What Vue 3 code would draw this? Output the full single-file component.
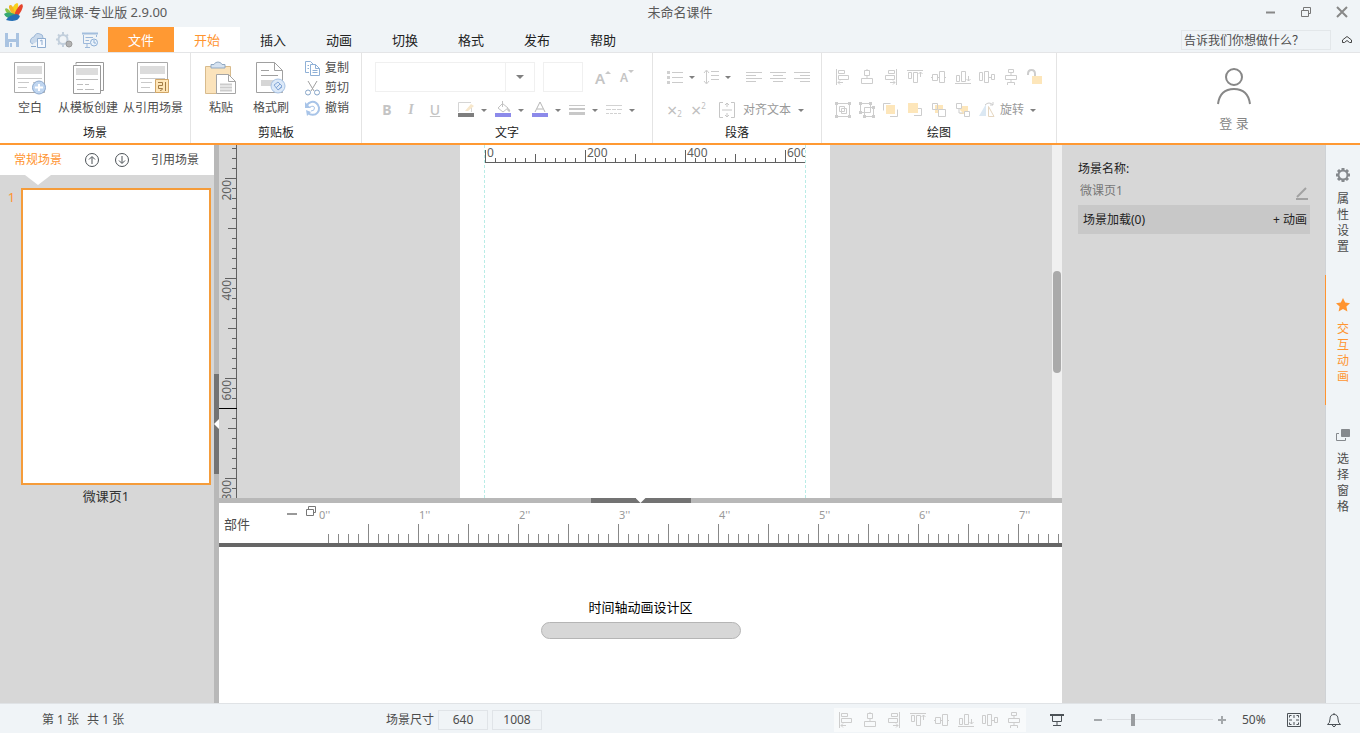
<script setup>
import { h, ref, computed, onMounted, onUnmounted } from 'vue'

const Glyph = (props) =>
  h(
    'svg',
    {
      width: props.w || 18,
      height: props.h || props.w || 18,
      viewBox: `0 0 ${props.w || 18} ${props.h || props.w || 18}`,
      fill: 'none',
      'aria-hidden': 'true',
    },
    props.layers.map(([d, stroke, fill, width]) =>
      h('path', {
        d,
        stroke: stroke || 'none',
        fill: fill || 'none',
        'stroke-width': width || 1,
      })
    )
  )
Glyph.props = ['layers', 'w', 'h']

const G = '#cdcdcd'
const B = '#8fb0d6'
const Y = '#fde6ba'

const alignIcons = [
  { name: '左对齐', layers: [['M2.5 1V17M4.5 2.5H10.5V5.5H4.5ZM4.5 7.5H14.5V11.5H4.5ZM4 14.5H9M6 12.5L4 14.5L6 16.5', G]] },
  { name: '水平居中', layers: [['M6.5 2.5H11.5V7.5H6.5ZM3.5 10.5H14.5V15.5H3.5ZM9 7.5V10.5M9 1V2.5', G]] },
  { name: '右对齐', layers: [['M14.5 1V17M6.5 2.5H12.5V5.5H6.5ZM3.5 7.5H12.5V11.5H3.5ZM8 14.5H13M11 12.5L13 14.5L11 16.5', G]] },
  { name: '顶端对齐', layers: [['M1 2.5H17M2.5 4.5H5.5V10.5H2.5ZM7.5 4.5H11.5V14.5H7.5ZM14.5 4V9M12.5 6L14.5 4L16.5 6', G]] },
  { name: '垂直居中', layers: [['M2.5 6.5H7.5V12.5H2.5ZM9.5 3.5H14.5V14.5H9.5ZM1 9.5H2.5M7.5 9.5H9.5M14.5 9.5H16', G]] },
  { name: '底端对齐', layers: [['M1 15.5H17M2.5 7.5H5.5V13.5H2.5ZM7.5 3.5H11.5V13.5H7.5ZM14.5 8V13M12.5 11L14.5 13L16.5 11', G]] },
  { name: '横向分布', layers: [['M1.5 4.5H4.5V12.5H1.5ZM6.5 3.5H10.5V14.5H6.5ZM13.5 6.5H16.5V11.5H13.5ZM11 9.5H13', G]] },
  { name: '纵向分布', layers: [['M6.5 1.5H11.5V4.5H6.5ZM3.5 7.5H14.5V11.5H3.5ZM5.5 14.5H12.5V17M5.5 17V14.5M9 4.5V7.5M9 11.5V14.5', G]] },
]
const lockIcon = { name: '锁定', layers: [['M2 7V6Q2 2 5.5 2Q9 2 9 6V9', G, 'none', 2], ['M6 8H16V16H6Z', '', Y]] }

const drawIcons = [
  { name: '组合', layers: [['M2.5 2.5H15.5V15.5H2.5ZM5.5 5.5H10.5V10.5H5.5ZM7.5 7.5H12.5V12.5H7.5Z', G], ['M1 1H4V4H1ZM14 1H17V4H14ZM1 14H4V17H1ZM14 14H17V17H14Z', '', G]] },
  { name: '取消组合', layers: [['M2.5 2.5H12.5V11.5H2.5ZM6.5 6.5H15.5V15.5H6.5Z', G], ['M1 1H4V4H1ZM11 1H14V4H11ZM1 10H4V13H1ZM14 5H17V8H14ZM5 14H8V17H5ZM14 14H17V17H14Z', '', G]] },
  { name: '置于顶层', layers: [['M4 4H13V13H4Z', '', Y], ['M8.5 2.5H1.500V9.5M8 15.500H15.500V8.5', G]] },
  { name: '上移一层', layers: [['M2 2H12V12H2Z', '', Y], ['M8 14.5H15.5V7.5H12', G]] },
  { name: '下移一层', layers: [['M5 4H13V12H5Z', '', Y], ['M2.5 2.5H7.5V8.5H2.5Z', G], ['M8.500 8.500H15.500V15.500H8.500Z', G, '#fff']] },
  { name: '置于底层', layers: [['M6 5H14V13H6Z', '', Y], ['M2.5 2.5H7.5V7.5H2.5ZM10.5 10.5H15.5V15.5H10.5ZM5 8V12H9', G, '#fff']] },
  { name: '镜像', layers: [['M8 3V15H1Z', '', '#dbe8f3'], ['M10.5 5.5L16 15.5H10.5Z', '#e5d6c0'], ['M7 4Q11 0 15 4M15 1V4H12', G]] },
]

const sheet = [
  ['M1.5 1.5H31.5V31.5H1.5Z', '#aaa', '#fff'],
  ['M4 5H29V13H4Z', '', '#dcdcdc'],
  ['M4 17.5H29M5 21.5H16M5 26.5H14M20 21.5H27', '#c9c9c9'],
]
const sceneButtons = [
  { label: '空白', layers: [...sheet, ['M26 20A6.500 6.500 0 1 1 26 33A6.500 6.500 0 1 1 26 20', '#8ca9cf', '#c0d6f0'], ['M26 23V30M22 26.500H30', '#fff', '', 2]] },
  { label: '从模板创建', layers: [['M5 3.5V1.5H32.5V29.5H30', '#999'], ['M2.5 4.5H29.5V32.5H2.5Z', '#999', '#fff'], ['M5 7H27V14H5Z', '', '#dcdcdc'], ['M5 18.5H27M6 23.5H12M14 23.5H18M6 28.500H12M14 28.500H23', '#bdbdbd']] },
  { label: '从引用场景', layers: [...sheet, ['M19.5 18.5H32.5V31.5H19.5Z', '#d1a667', '#ffe6b8'], ['M22 21.5H26.500V24.5H22.5V27.5H26.500Q26.500 29.500 24 29.500M29.500 21V30', '#a27c45']] },
]
const clipButtons = [
  {
    label: '粘贴',
    layers: [['M1.500 5.500H26.500V32.500H1.500Z', '#d8bb8c', '#fbe3bb'], ['M7 7V3.500H10Q11 1 14 1Q17 1 18 3.500H21V7Z', '#91a9c3', '#d5e2f0'], ['M12.500 13.500H24.500L31.500 20.500V32.500H12.500Z', '#a5a5a5', '#fff'], ['M24.500 13.500V20.500H31.500', '#a5a5a5'], ['M16 23.500H28M16 26.500H28M16 29.500H28', '#ccc', '', 2]],
  },
  {
    label: '格式刷',
    layers: [['M2.500 1.500H20.500L28.500 9.500V31.500H2.500Z', '#a0a0a0', '#fff'], ['M20.500 1.500V9.500H28.500M7 9.500H15M7 14.500H24', '#a0a0a0'], ['M7 19H23V25H7Z', '', '#d6d6d6'], ['M24 18A7 7 0 1 1 24 32A7 7 0 1 1 24 18', '#a7c2e4', '#dce9f8'], ['M20 24L24 21L28 25L24 29ZM22 27L26 23M24 29L28 26', '#85a8d8']],
  },
]
const clipActions = [
  { label: '复制', layers: [['M1.500 1.500H6.500L9.500 4.500M5 12.500H1.500V1.500M6.500 4.500H11.500L15.500 8.500V15.500H6.500ZM11.500 4.500V8.500H15.500M8.500 10.500H13.500M8.500 12.500H13.500M3.500 5.500H5M3.500 8.500H5', B]] },
  { label: '剪切', layers: [['M4 1L10 11M13 1L7 11', '#a0a0a0'], ['M4 10A2.500 2.500 0 1 1 4 15A2.500 2.500 0 1 1 4 10M13 10A2.500 2.500 0 1 1 13 15A2.500 2.500 0 1 1 13 10', '#87a5c8']] },
  { label: '撤销', layers: [['M3 5A6.500 6.500 0 1 1 4 13', '#a8c4e8', '', 2], ['M6 7Q10 5 10.500 8Q10.500 11 7 11', '#a8c4e8', '', 1], ['M1 2V8H7Z', '', '#a8c4e8'], ['M2 10L7 12L3 16Z', '', '#a8c4e8']] },
]

const quickIcons = [
  { name: '保存', layers: [['M2 2H16V16H2Z', '', '#a9c3e1'], ['M5 2H13V8H5ZM6 11H13V16H6Z', '', '#f0f5fa'], ['M8 12V16', '#a9c3e1', '', 2]] },
  { name: '发布', layers: [['M4 13Q0 12 2 8Q3 6 5 6Q7 1 11 3Q14 3 14 7', '#9db8d8', '#c9d9eb'], ['M8.500 7.500H16.500V16.500H8.500Z', '#8fadd0', '#f7faff'], ['M11 10L13 9V14M2 15.500H7', '#8fadd0']] },
  { name: '设置', layers: [['M8 4A4.500 4.500 0 1 1 8 13A4.500 4.500 0 1 1 8 4', '#c2cfdc', '', 2], ['M8 1V4M8 13V16M1 8.500H4M3 3.500L5 5.500M13 3.500L11 5.500M3 13.500L5 11.500', '#c2cfdc', '', 2], ['M14 10A3 3 0 1 1 14 16A3 3 0 1 1 14 10', '#999', '#b2b2b2']] },
  { name: '预览', layers: [['M1 2.500H17', '#a3bedd', '', 2], ['M2.500 4V12.500H9M4.500 6.500H12M4.500 9.500H8M4 16.500H9M6 13V16M15.500 4V6', '#9cb8da'], ['M13 8A3.500 3.500 0 1 1 13 15A3.500 3.500 0 1 1 13 8M13 9V12H15', '#8fb0d6', '#eaf3fc']] },
]

const tabs = ['开始', '插入', '动画', '切换', '格式', '发布', '帮助']

const textTools = [
  { name: '边框颜色', layers: [['M1.500 11V1.500H14M14.500 6V11', '#d5d5d5'], ['M8 10L14 3L17 5L11 10Z', '', '#f7e7cb'], ['M1 12H17V16H1Z', '', '#7e7e7e']] },
  { name: '填充颜色', layers: [['M8.500 2.500L14 7L9 11L4 7ZM8.500 0V6', '#c2c2c2'], ['M14 7Q18 10 15 11L13 9Z', '', '#c5c5c5'], ['M1 12H17V16H1Z', '', '#8c8aea']] },
  { name: '字体颜色', layers: [['M4 11L9 1L14 11M6 8H12', '#b6b6b6'], ['M1 12H17V16H1Z', '', '#8c8aea']] },
  { name: '线条粗细', layers: [['M1 4.500H17', '#c8c8c8'], ['M1 8H17', '#c8c8c8', '', 2], ['M1 12.500H17', '#c8c8c8', '', 3]] },
  { name: '线条样式', layers: [['M1 4.500H17M1 8.500H6M7 8.500H11M12 8.500H17M1 12.500H4M5 12.500H8M9 12.500H12M13 12.500H16', '#d2d2d2']] },
]
const bulletIcon = [['M6 4.500H17M6 9.500H17M6 14.500H17', '#cbcbcb'], ['M1 3H4V6H1ZM1 8H4V11H1ZM1 13H4V16H1Z', '', '#d0d0d0']]
const spacingIcon = [['M4.500 3V15M2 5L4.500 2L7 5M2 13L4.500 16L7 13M9 3.500H17M9 7.500H17M9 11.500H17', '#cbcbcb']]
const paraIcons = [
  { name: '文本左对齐', layers: [['M1 3.500H17M1 6.500H11M1 9.500H17M1 12.500H11', '#cbcbcb']] },
  { name: '文本居中', layers: [['M1 3.500H17M4 6.500H14M1 9.500H17M4 12.500H14', '#cbcbcb']] },
  { name: '文本右对齐', layers: [['M1 3.500H17M7 6.500H17M1 9.500H17M7 12.500H17', '#cbcbcb']] },
]
const textBoxIcon = [['M5 1.500H1.500V16.500H5M13 1.500H16.500V16.500H13M4 9H14M9 2V6M9 12V16M7 4L9 2L11 4M7 14L9 16L11 14', '#c6c6c6']]

const sideTabs = [
  { label: '属性设置', layers: [['M8 3.500A4.500 4.500 0 1 1 8 12.500A4.500 4.500 0 1 1 8 3.500', '#85898d', '', 2], ['M8 1V3M8 13V15M1 8H3M13 8H15M3 3L4.500 4.500M13 3L11.500 4.500M3 13L4.500 11.500M13 13L11.500 11.500', '#85898d', '', 3]] },
  { label: '交互动画', active: true, layers: [['M8 1L10.200 5.600L15 6.200L11.400 9.500L12.400 14.500L8 12L3.600 14.500L4.600 9.500L1 6.200L5.800 5.600Z', '', '#ff9430']] },
  { label: '选择窗格', layers: [['M4 6.500H1.500V13.500H10.500V11', '#85898d'], ['M6.500 2.500H14.500V9.500H6.500Z', '#85898d', '#85898d']] },
]

const view = ref({ w: window.innerWidth, h: window.innerHeight })
const measure = () => {
  view.value = { w: window.innerWidth, h: window.innerHeight }
}
onMounted(() => window.addEventListener('resize', measure))
onUnmounted(() => window.removeEventListener('resize', measure))

const rulerTicks = Array.from({ length: 33 }, (_, i) => i)
const stageHeight = computed(() => Math.max(view.value.h - 380, 0))
const timeWidth = computed(() => Math.max(view.value.w - 616, 0))
const vTickCount = computed(() => Math.ceil(stageHeight.value / 10))
const vLabelCount = computed(() => Math.floor((stageHeight.value + 65) / 100))
const timeTickCount = computed(() => Math.floor(timeWidth.value / 10))
const timeLabelCount = computed(() => Math.floor((timeWidth.value + 85) / 100))
const tickSize = (i) => (i % 10 === 0 ? 12 : i % 5 === 0 ? 8 : 4)
const zoom = ref(24)
</script>

<template>
  <div class="app">
    <header class="titlebar">
      <div class="brand">
        <svg width="20" height="20" viewBox="0 0 20 20" aria-hidden="true">
          <path d="M8 13Q8 2 13 1Q16 1 12 13Z" fill="#f7d21e" />
          <path d="M10 13Q14 3 18 2Q21 5 13 15Z" fill="#e5442d" />
          <path d="M8 12Q3 4 6 3Q9 2 11 12Z" fill="#f4b525" />
          <path d="M9 13Q3 4 1 7Q1 12 10 15Z" fill="#8bc34a" />
          <path d="M11 12Q3 9 0 12Q2 17 9 16Z" fill="#35a874" />
          <path d="M13 12Q5 13 2 18Q14 21 16 14Z" fill="#256fb5" />
        </svg>
        <span>绚星微课-专业版 2.9.00</span>
      </div>
      <span>未命名课件</span>
      <div class="window-buttons">
        <button aria-label="最小化"><svg width="12" height="12"><path d="M2 6.500H11" stroke="#888" stroke-width="2" /></svg></button>
        <button aria-label="还原"><svg width="12" height="12" fill="none" stroke="#777"><path d="M1.500 4.500H8.500V10.500H1.500ZM3.500 4V1.500H10.500V7.500H9" /></svg></button>
        <button aria-label="关闭"><svg width="12" height="12"><path d="M1 1L11 11M11 1L1 11" stroke="#888" stroke-width="2" /></svg></button>
      </div>
    </header>

    <div class="menubar">
      <div class="quick">
        <button v-for="q in quickIcons" :key="q.name" :aria-label="q.name"><Glyph :layers="q.layers" /></button>
      </div>
      <nav class="tabs">
        <button class="tab file">文件</button>
        <button v-for="(t, i) in tabs" :key="t" class="tab" :class="{ current: i === 0 }">{{ t }}</button>
      </nav>
      <input class="search" type="text" value="告诉我们你想做什么？" aria-label="搜索" />
      <button class="collapse" aria-label="收起功能区"><svg width="12" height="10" fill="none" stroke="#444"><path d="M1.500 5L6 1.500L10.500 5V7.500H8.500L6 5.500L3.500 7.500H1.500Z" /></svg></button>
    </div>

    <section class="ribbon">
      <div class="group scenes">
        <div class="group-body">
          <button v-for="b in sceneButtons" :key="b.label" class="big"><Glyph :layers="b.layers" w="34" /><span>{{ b.label }}</span></button>
        </div>
        <div class="group-name">场景</div>
      </div>
      <div class="group clipboard">
        <div class="group-body">
          <button v-for="b in clipButtons" :key="b.label" class="big"><Glyph :layers="b.layers" w="34" /><span>{{ b.label }}</span></button>
          <div class="actions">
            <button v-for="a in clipActions" :key="a.label"><Glyph :layers="a.layers" w="17" />{{ a.label }}</button>
          </div>
        </div>
        <div class="group-name">剪贴板</div>
      </div>
      <div class="group fonts">
        <div class="rows">
          <div class="row">
            <label class="font-box">
              <select aria-label="字体"><option></option></select>
              <span class="drop"><i class="arrow"></i></span>
            </label>
            <input class="size-box" type="text" aria-label="字号" />
            <button class="letter grow" aria-label="增大字号">A<svg width="6" height="4"><path d="M0 4L3 1L6 4Z" fill="#c8c8c8" /></svg></button>
            <button class="letter shrink" aria-label="减小字号">A<svg width="6" height="4"><path d="M0 0L3 3L6 0Z" fill="#c8c8c8" /></svg></button>
          </div>
          <div class="row second">
            <button class="style-btn bold">B</button>
            <button class="style-btn italic">I</button>
            <button class="style-btn under">U</button>
            <div class="tool-set">
              <button v-for="t in textTools" :key="t.name" class="tool" :aria-label="t.name"><Glyph :layers="t.layers" /><i class="arrow small"></i></button>
            </div>
          </div>
        </div>
        <div class="group-name">文字</div>
      </div>
      <div class="group para">
        <div class="rows">
          <div class="row">
            <button class="tool" aria-label="项目符号"><Glyph :layers="bulletIcon" /><i class="arrow small"></i></button>
            <button class="tool" aria-label="行距"><Glyph :layers="spacingIcon" /><i class="arrow small"></i></button>
            <div class="icon-row">
              <button v-for="p in paraIcons" :key="p.name" :aria-label="p.name"><Glyph :layers="p.layers" w="18" h="16" /></button>
            </div>
          </div>
          <div class="row second">
            <button class="script" aria-label="下标">×<sub>2</sub></button>
            <button class="script" aria-label="上标">×<sup>2</sup></button>
            <button class="align-text"><Glyph :layers="textBoxIcon" />对齐文本<i class="arrow small"></i></button>
          </div>
        </div>
        <div class="group-name">段落</div>
      </div>
      <div class="group draw">
        <div class="rows">
          <div class="row icon-row">
            <button v-for="a in [...alignIcons, lockIcon]" :key="a.name" :aria-label="a.name"><Glyph :layers="a.layers" /></button>
          </div>
          <div class="row second icon-row">
            <button v-for="a in drawIcons" :key="a.name" :aria-label="a.name"><Glyph :layers="a.layers" /></button>
            <button class="rotate">旋转<i class="arrow small"></i></button>
          </div>
        </div>
        <div class="group-name">绘图</div>
      </div>
      <button class="login">
        <svg width="36" height="38" fill="none" stroke="#878787" stroke-width="2"><circle cx="18" cy="10" r="8" /><path d="M2 37Q4 22 18 22Q32 22 34 37" /></svg>
        <span>登 录</span>
      </button>
    </section>

    <main class="workspace">
      <aside class="scene-panel">
        <div class="scene-tabs">
          <button class="on">常规场景</button>
          <button class="circle" aria-label="上移"><svg width="16" height="16" fill="none" stroke="#4c5257"><circle cx="8" cy="8" r="6.500" /><path d="M8 12V5M5 7.500L8 4.500L11 7.500" /></svg></button>
          <button class="circle" aria-label="下移"><svg width="16" height="16" fill="none" stroke="#4c5257"><circle cx="8" cy="8" r="6.500" /><path d="M8 4V11M5 8.500L8 11.500L11 8.500" /></svg></button>
          <button class="quote">引用场景</button>
        </div>
        <div class="pointer"></div>
        <div class="thumb">
          <span class="num">1</span>
          <div class="page-thumb"></div>
          <span class="thumb-name">微课页1</span>
        </div>
      </aside>
      <div class="split-v"><div class="grip-v"></div></div>

      <div class="center">
        <div class="stage">
          <svg class="ruler-v" width="18">
            <g stroke="#606060">
              <path v-for="i in vTickCount" :key="i" :d="`M${17 - (i % 10 === 4 ? 11 : i % 5 === 4 ? 8 : 4)} ${i * 10 - 6.5}H17`" />
              <path :d="`M17.500 0V${stageHeight}`" />
            </g>
            <path d="M0 263.500H18" stroke="#000" />
            <text v-for="n in vLabelCount" :key="n" :transform="`translate(12 ${n * 100 - 65}) rotate(-90)`" text-anchor="end">{{ n * 200 }}</text>
          </svg>
          <div class="viewport">
            <div class="paper">
              <div class="safe">
                <svg class="ruler-h" height="18">
                  <g stroke="#606060">
                    <path v-for="i in rulerTicks" :key="i" :d="`M${i * 10 + 0.5} ${17 - tickSize(i)}V17`" />
                    <path d="M0 17.500H340" />
                  </g>
                  <text v-for="n in 4" :key="n" :x="n * 100 - 98" y="12">{{ (n - 1) * 200 }}</text>
                </svg>
              </div>
            </div>
          </div>
          <div class="scroll"><div class="scroll-thumb"></div></div>
        </div>
        <div class="split-h"><div class="grip-h"></div></div>
        <section class="timeline">
          <div class="time-head">
            <span class="parts">部件</span>
            <div class="time-buttons">
              <button aria-label="收起"><svg width="12" height="13"><path d="M1 9H11" stroke="#999" stroke-width="2" /></svg></button>
              <button aria-label="展开"><svg width="12" height="12" fill="none" stroke="#777"><path d="M1.500 4.500H8.500V10.500H1.500ZM3.500 4V1.500H10.500V7.500H9" /></svg></button>
            </div>
            <svg class="time-ruler">
              <path v-for="i in timeTickCount" :key="i" :d="`M${i * 10 + 0.5} ${i % 5 === 0 ? 21 : 31}V40`" stroke="#888" />
              <text v-for="n in timeLabelCount" :key="n" :x="n * 100 - 99" y="16">{{ n - 1 }}''</text>
            </svg>
          </div>
          <div class="time-body">
            <span>时间轴动画设计区</span>
            <div class="pill"></div>
          </div>
        </section>
      </div>

      <aside class="props">
        <label for="scene-name">场景名称:</label>
        <div class="name-row">
          <input id="scene-name" type="text" value="微课页1" />
          <svg width="14" height="14" fill="none" stroke="#a2a2a2"><path d="M1 13H13" stroke-width="2" /><path d="M2 11L11 2" stroke-width="2" /></svg>
        </div>
        <div class="load-row"><span>场景加载(0)</span><button>+ 动画</button></div>
      </aside>
      <nav class="side-tabs">
        <button v-for="s in sideTabs" :key="s.label" :class="{ active: s.active }"><Glyph :layers="s.layers" w="16" /><span>{{ s.label }}</span></button>
      </nav>
    </main>

    <footer class="status">
      <div class="count"><span>第 1 张</span><span>共 1 张</span></div>
      <div class="dims">
        <label for="dim-w">场景尺寸</label>
        <input id="dim-w" type="text" value="640" />
        <input type="text" value="1008" aria-label="场景高度" />
      </div>
      <div class="status-right">
        <div class="icon-row status-align">
          <button v-for="a in alignIcons" :key="a.name" :aria-label="a.name"><Glyph :layers="a.layers" /></button>
        </div>
        <button class="present" aria-label="放映"><svg width="14" height="14" fill="none" stroke="#4c5257"><path d="M0 2H14" stroke-width="2" /><path d="M2.500 3V8.500H11.500V3M7 9V12M3 12.500H11" /></svg></button>
        <button class="minus" aria-label="缩小"><svg width="10" height="10"><path d="M1 5H9" stroke="#a4a8ab" stroke-width="2" /></svg></button>
        <input v-model="zoom" class="zoom" type="range" min="0" max="100" aria-label="缩放" />
        <button class="plus" aria-label="放大"><svg width="10" height="10"><path d="M1 5H9M5 1V9" stroke="#a4a8ab" stroke-width="2" /></svg></button>
        <span class="percent">50%</span>
        <button class="fit" aria-label="适应窗口"><svg width="16" height="16" fill="none" stroke="#4c5257"><path d="M1.500 1.500H14.500V14.500H1.500ZM8 3V6M8 10V13M3 8H6M10 8H13M3.500 5.500V3.500H5.500M10.500 3.500H12.500V5.500M3.500 10.500V12.500H5.500M10.500 12.500H12.500V10.500" /></svg></button>
        <button class="bell" aria-label="通知"><svg width="16" height="16" fill="none" stroke="#4c5257"><path d="M1.500 12.500Q4 11 4 7Q4 2.500 8 2.500Q12 2.500 12 7Q12 11 14.500 12.500ZM6 12.500Q8 17 10 12.500M8 1V2.500" /></svg></button>
      </div>
    </footer>
  </div>
</template>

<style>
body {
  margin: 0;
}
</style>

<style scoped>
.app {
  height: 100vh;
  display: flex;
  flex-direction: column;
  overflow: hidden;
  font-family: "Noto Sans", "Noto Sans CJK SC", sans-serif;
  font-size: 12px;
  line-height: 16px;
  color: #4c4c4c;
  background: #f0f4f7;
}
.app * {
  box-sizing: border-box;
}
.app svg {
  flex: none;
  display: block;
}
.app button,
.app input,
.app select {
  font: inherit;
  color: inherit;
  background: none;
  border: 0;
  padding: 0;
  margin: 0;
  white-space: nowrap;
  border-radius: 0;
  outline: 0;
}
.titlebar {
  height: 27px;
  flex: none;
  display: grid;
  grid-template-columns: 1fr auto 1fr;
  align-items: center;
  font-size: 13px;
  color: #5a5a5a;
  padding-bottom: 3px;
}
.brand {
  display: flex;
  align-items: center;
  gap: 8px;
  padding-left: 4px;
}
.window-buttons {
  display: flex;
  justify-content: flex-end;
  gap: 24px;
  padding-right: 12px;
}
.menubar {
  height: 26px;
  flex: none;
  display: flex;
  align-items: center;
  border-bottom: 1px solid #e4e5e7;
}
.quick {
  width: 108px;
  padding-left: 3px;
  display: flex;
  gap: 8px;
}
.tabs {
  display: flex;
  flex: 1;
  align-self: stretch;
}
.app .tab {
  width: 66px;
  font-size: 13px;
  color: #222;
}
.app .tab.file {
  background: #ff9933;
  color: #fff;
}
.app .tab.current {
  background: #fff;
  color: #ff9430;
}
.app .search {
  width: 150px;
  height: 20px;
  border: 1px solid #e3e7ea;
  padding: 0 2px;
}
.app .collapse {
  margin: 0 7px 0 10px;
}
.ribbon {
  height: 92px;
  flex: none;
  display: flex;
  background: #fff;
  border-bottom: 2px solid #ff9933;
}
.group {
  flex: none;
  display: flex;
  flex-direction: column;
  border-right: 1px solid #e4e4e4;
}
.group-body,
.rows {
  height: 72px;
}
.group-body {
  display: grid;
}
.group-name {
  text-align: center;
  color: #222;
}
.scenes {
  width: 191px;
}
.scenes .group-body {
  grid-template-columns: 56px 60px 70px;
  padding-left: 2px;
}
.clipboard {
  width: 171px;
}
.clipboard .group-body {
  grid-template-columns: 50px 50px 1fr;
  padding-left: 5px;
}
.big {
  display: flex;
  flex-direction: column;
  align-items: center;
  gap: 5px;
}
.app .big {
  padding-top: 8px;
}
.actions {
  display: flex;
  flex-direction: column;
  gap: 4px;
  padding: 7px 0 0 8px;
}
.actions button {
  display: flex;
  align-items: center;
  gap: 4px;
  height: 16px;
}
.fonts {
  width: 291px;
}
.para {
  width: 169px;
}
.draw {
  width: 235px;
}
.row {
  display: flex;
  align-items: center;
  height: 30px;
  margin-top: 9px;
}
.row.second {
  height: 24px;
  margin-top: 6px;
}
.fonts .row {
  padding-left: 13px;
}
.font-box {
  width: 160px;
  height: 30px;
  display: flex;
  border: 1px solid #f0f0f0;
}
.app .font-box select {
  flex: 1;
  appearance: none;
  border-right: 1px solid #f0f0f0;
}
.drop {
  width: 28px;
  display: grid;
  place-items: center;
}
.arrow {
  border: 4px solid transparent;
  border-top-color: #808080;
  border-bottom: 0;
}
.arrow.small {
  border-width: 3px;
  border-bottom: 0;
}
.app .size-box {
  width: 40px;
  height: 30px;
  border: 1px solid #f0f0f0;
  margin-left: 8px;
}
.app .letter {
  display: flex;
  color: #c4c4c4;
  font-weight: 600;
  font-size: 15px;
  margin-left: 12px;
  padding-top: 2px;
  width: 16px;
}
.app .letter.shrink {
  font-size: 12px;
  margin-left: 9px;
}
.app .style-btn {
  width: 24px;
  font-size: 14px;
  font-weight: 700;
  color: #c4c4c4;
}
.app .italic {
  font-family: "Liberation Serif", serif;
  font-style: italic;
}
.app .under {
  font-weight: 500;
  text-decoration: underline;
}
.tool-set {
  display: flex;
  padding-left: 10px;
}
.tool {
  display: flex;
  align-items: center;
  gap: 6px;
}
.app .tool {
  width: 37px;
}
.para .row {
  padding-left: 13px;
}
.app .para .tool {
  width: 36px;
  gap: 5px;
}
.para .icon-row {
  padding-left: 4px;
}
.icon-row {
  display: flex;
}
.app .icon-row button {
  width: 24px;
  display: grid;
  place-items: center;
}
.draw .row {
  padding-left: 9px;
}
.app .align-text {
  display: flex;
  align-items: center;
  color: #999;
  gap: 7px;
  margin-left: 4px;
}
.app .icon-row .rotate {
  display: flex;
  align-items: center;
  color: #999;
  width: auto;
  gap: 6px;
  padding-left: 1px;
}
.app .script {
  width: 24px;
  display: flex;
  color: #c0c0c0;
  font-size: 18px;
  padding-left: 1px;
}
.script sub,
.script sup {
  font-size: 8px;
  line-height: 8px;
}
.script sub {
  align-self: flex-end;
}
.script sup {
  align-self: flex-start;
}
.app .login {
  display: flex;
  flex-direction: column;
  align-items: center;
  gap: 10px;
  margin-left: auto;
  margin-right: 108px;
  padding-top: 14px;
  color: #858585;
  font-size: 13px;
}
.workspace {
  flex: 1;
  min-height: 0;
  display: flex;
}
.scene-panel {
  width: 214px;
  flex: none;
  background: #d7d7d7;
}
.scene-tabs {
  height: 30px;
  display: flex;
  align-items: center;
  background: #fff;
  padding-left: 14px;
}
.app .scene-tabs .on {
  color: #ff9430;
  margin-right: 15px;
}
.app .scene-tabs .circle {
  width: 30px;
  display: grid;
  place-items: center;
}
.app .scene-tabs .quote {
  margin-left: 14px;
}
.pointer {
  width: 26px;
  height: 10px;
  margin-left: 25px;
  background: #fff;
  clip-path: polygon(0 0, 100% 0, 50% 100%);
}
.thumb {
  display: grid;
  grid-template-columns: 21px 1fr;
  padding: 3px 3px 0 0;
  row-gap: 3px;
  font-size: 13px;
}
.num {
  color: #ff9430;
  text-align: center;
  padding: 1px 0 0 2px;
}
.page-thumb {
  height: 297px;
  border: 2px solid #f59c3a;
  background: #fff;
}
.thumb-name {
  grid-column: 2;
  text-align: center;
  padding-right: 20px;
  color: #333;
}
.split-v {
  width: 5px;
  flex: none;
  background: #b8b8b8;
  display: flex;
  align-items: center;
}
.grip-v {
  width: 5px;
  height: 100px;
  background: #737373;
  display: flex;
  align-items: center;
}
.grip-v::before {
  content: "";
  width: 5px;
  height: 10px;
  background: #fff;
  clip-path: polygon(0 50%, 100% 0, 100% 100%);
}
.center {
  flex: 1;
  min-width: 0;
  display: flex;
  flex-direction: column;
}
.stage {
  flex: 1;
  min-height: 0;
  display: flex;
  background: #d7d7d7;
}
.app .ruler-v {
  height: auto;
  align-self: stretch;
}
.ruler-v text {
  font-size: 12px;
  fill: #606060;
}
.ruler-h text {
  font-size: 12px;
  fill: #606060;
}
.viewport {
  flex: 1;
  display: flex;
  justify-content: center;
}
.paper {
  width: 370px;
  padding: 0 24px;
  background: #fff;
}
.safe {
  height: 100%;
  border-left: 1px dashed #b9ece6;
  border-right: 1px dashed #b9ece6;
}
.app .ruler-h {
  width: 100%;
}
.scroll {
  width: 10px;
  background: #f0f0f0;
  padding: 126px 1px 0;
}
.scroll-thumb {
  height: 102px;
  border-radius: 4px;
  background: #aaa;
}
.split-h {
  height: 5px;
  flex: none;
  background: #b8b8b8;
}
.grip-h {
  width: 100px;
  height: 5px;
  margin: 0 auto;
  background: #737373;
}
.grip-h::before {
  content: "";
  display: block;
  width: 10px;
  height: 5px;
  margin: 0 auto;
  background: #fff;
  clip-path: polygon(0 0, 100% 0, 50% 100%);
}
.timeline {
  height: 200px;
  flex: none;
  background: #fff;
}
.time-head {
  height: 44px;
  display: flex;
  border-bottom: 4px solid #666;
}
.parts {
  width: 67px;
  flex: none;
  padding: 13px 0 0 5px;
  font-size: 13px;
}
.time-buttons {
  width: 32px;
  flex: none;
  display: flex;
  align-items: flex-start;
  gap: 7px;
  padding-top: 2px;
}
.app .time-ruler {
  flex: 1;
  min-width: 0;
  height: 40px;
}
.time-ruler text {
  font-size: 11px;
  fill: #999;
}
.time-body {
  display: flex;
  flex-direction: column;
  align-items: center;
  gap: 7px;
  padding-top: 52px;
  font-size: 13px;
  color: #000;
}
.pill {
  width: 200px;
  height: 17px;
  border: 1px solid #b5b5b5;
  border-radius: 9px;
  background: #d7d7d7;
}
.props {
  width: 263px;
  flex: none;
  background: #d7d7d7;
  padding: 16px 15px 0 16px;
  color: #222;
}
.props label {
  display: block;
}
.name-row {
  display: flex;
  align-items: center;
  height: 28px;
  padding: 0 1px 0 2px;
}
.app .name-row input {
  flex: 1;
  min-width: 0;
  color: #777;
}
.name-row svg {
  margin-top: 4px;
}
.load-row {
  height: 29px;
  display: flex;
  align-items: center;
  justify-content: space-between;
  padding: 0 3px 0 5px;
  background: #c8c8c8;
}
.side-tabs {
  width: 35px;
  flex: none;
  border-left: 1px solid #cfd2d5;
}
.app .side-tabs button {
  width: 34px;
  height: 130px;
  display: flex;
  flex-direction: column;
  align-items: center;
  gap: 8px;
  padding-top: 22px;
}
.app .side-tabs .active {
  color: #ff9430;
  box-shadow: -1px 0 #ff9430;
}
.side-tabs span {
  width: 14px;
  white-space: normal;
  word-break: break-all;
}
.status {
  height: 30px;
  flex: none;
  display: flex;
  align-items: center;
  border-top: 1px solid #e0e3e6;
  padding-top: 2px;
}
.count {
  width: 386px;
  padding-left: 42px;
  display: flex;
  gap: 8px;
}
.dims {
  display: flex;
  align-items: center;
  gap: 4px;
}
.app .dims input {
  width: 50px;
  height: 20px;
  border: 1px solid #e0e4e8;
  text-align: center;
}
.status-right {
  margin-left: auto;
  display: flex;
  align-items: center;
  padding-right: 18px;
}
.status-align {
  height: 24px;
  width: 192px;
  align-items: center;
  background: #f8fafb;
}
.app .present {
  margin: 0 29px 0 24px;
}
.app .zoom {
  appearance: none;
  width: 106px;
  height: 12px;
  margin: 0 4px;
  background: linear-gradient(#dde0e3, #dde0e3) center / 100% 1px no-repeat;
}
.zoom::-webkit-slider-thumb {
  appearance: none;
  width: 4px;
  height: 12px;
  background: #9a9da0;
}
.app .plus {
  margin-right: 15px;
}
.percent {
  width: 44px;
}
.app .bell {
  margin-left: 24px;
}
</style>
